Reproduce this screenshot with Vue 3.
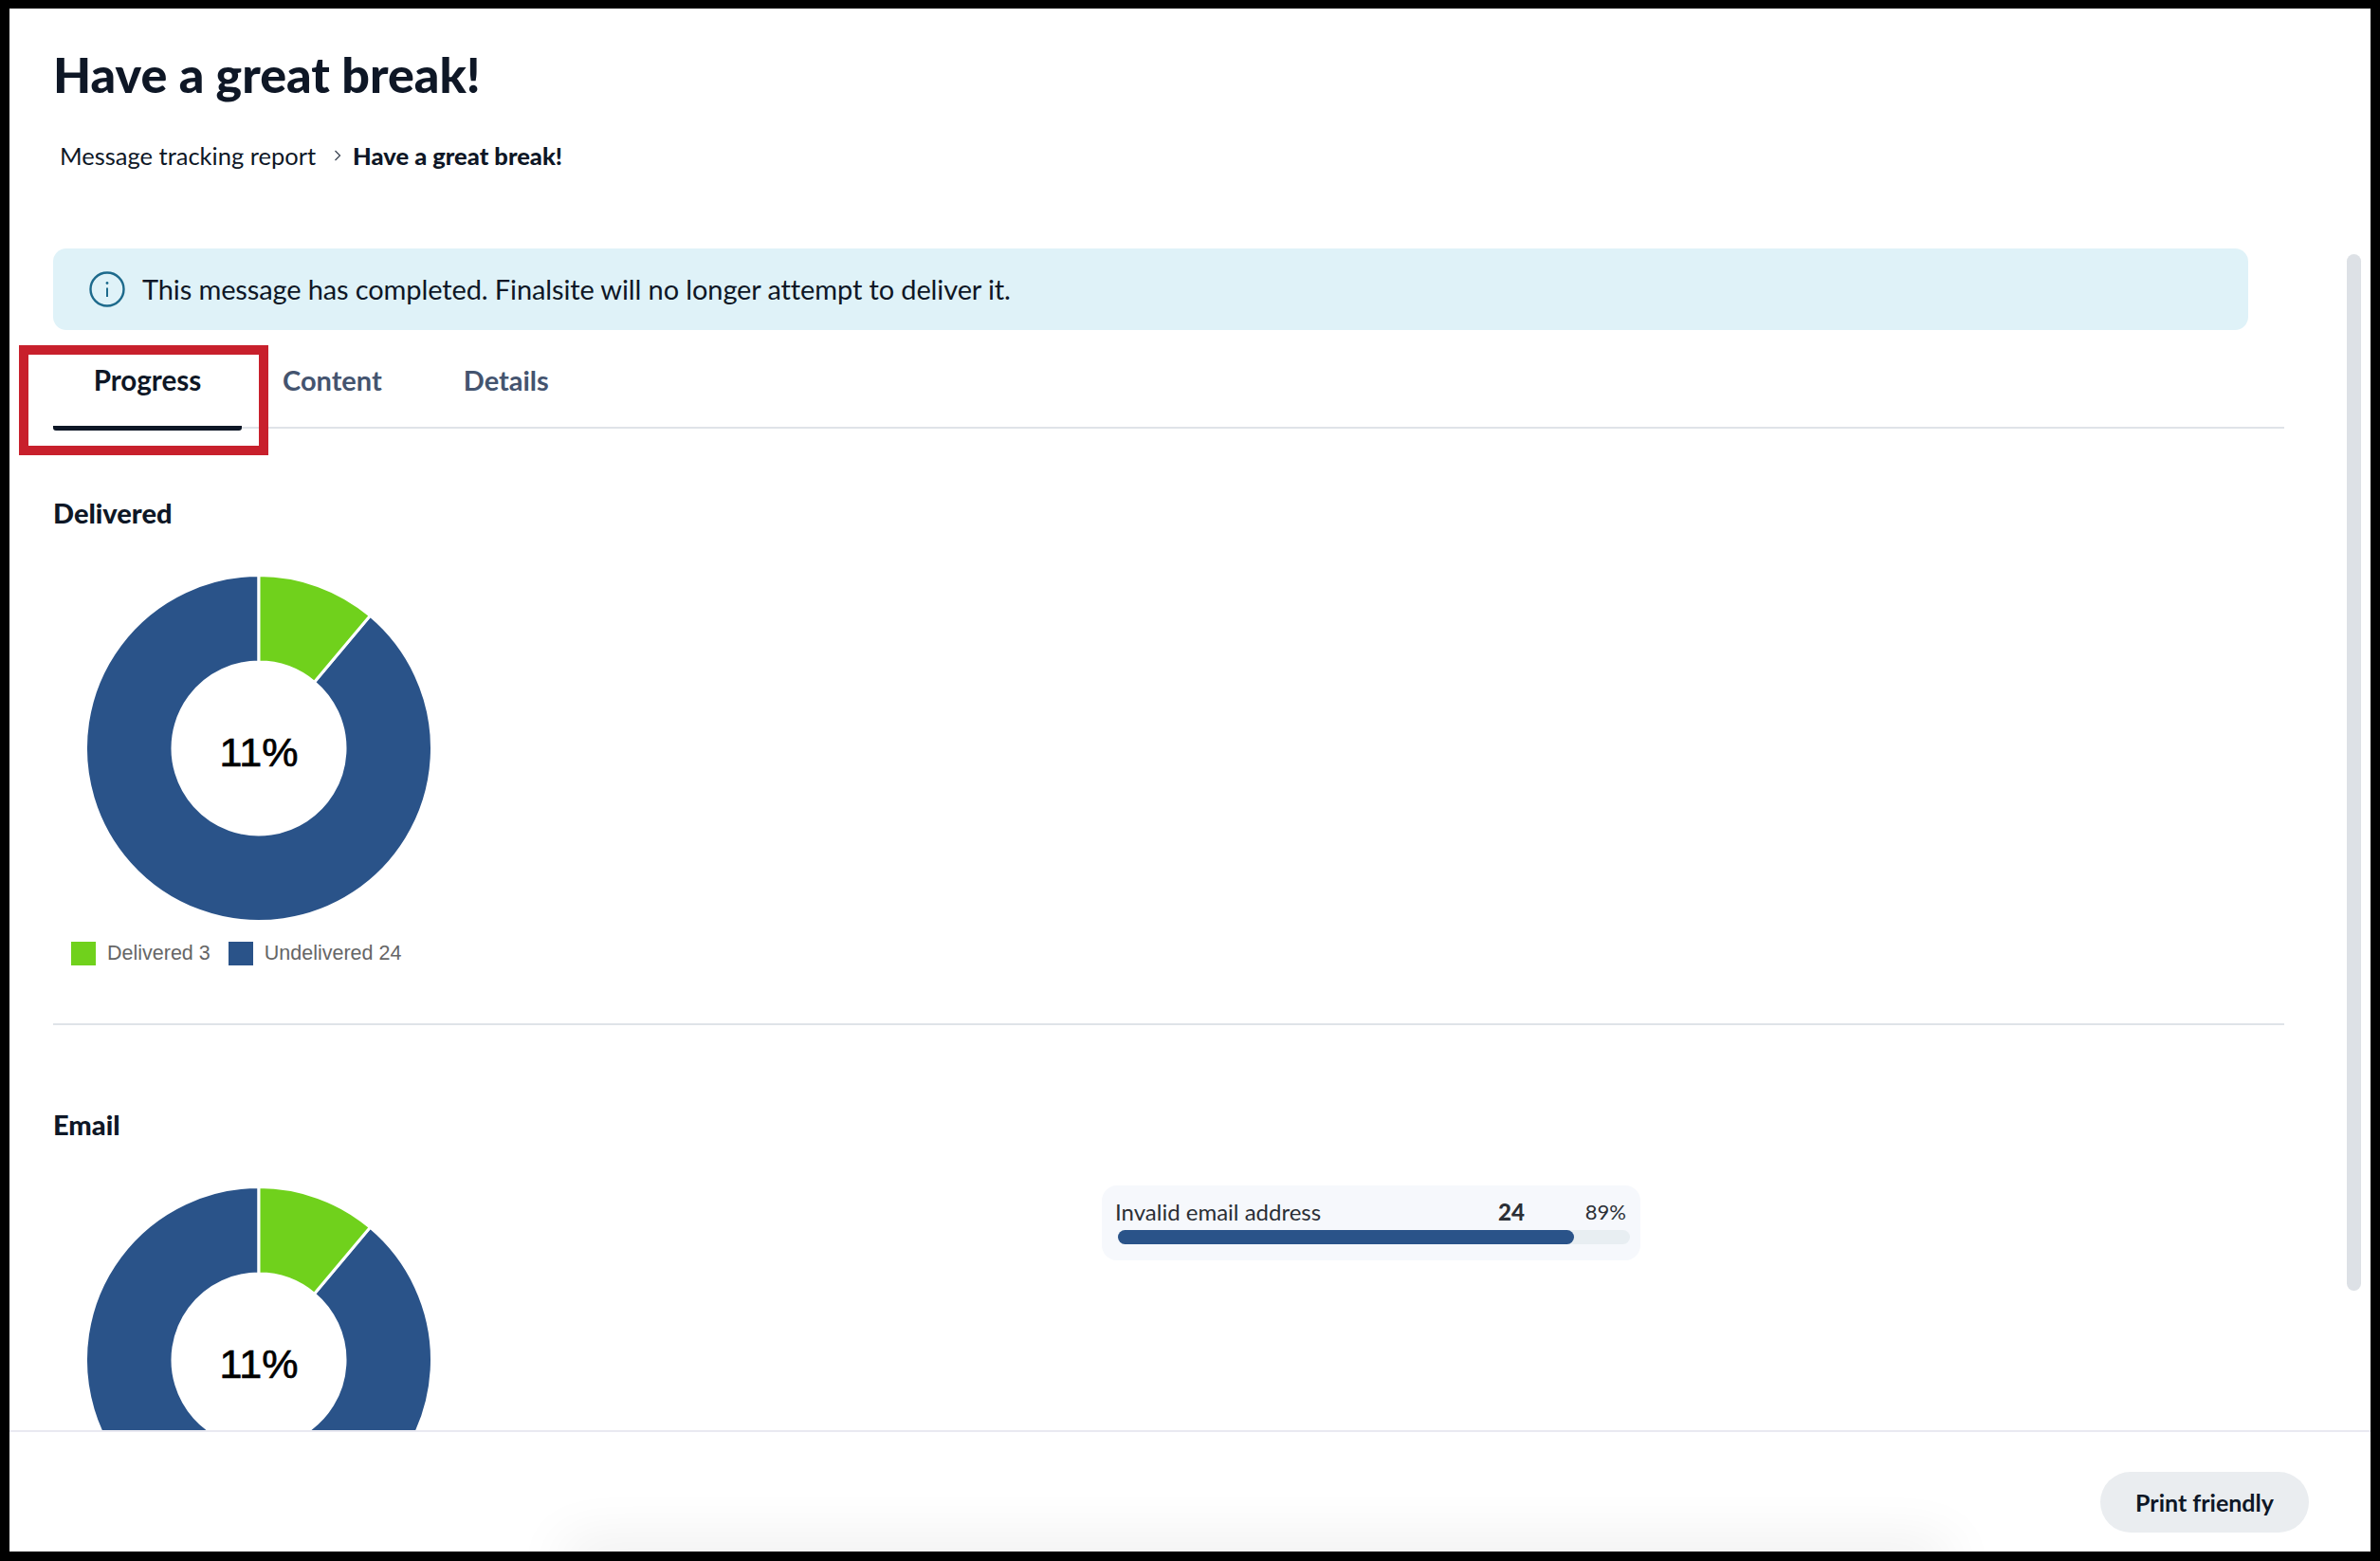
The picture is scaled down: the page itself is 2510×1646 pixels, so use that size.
<template>
  <div class="frame">
    <div class="report">
      <div class="report__body">
        <h1 class="report__title">Have a great break!</h1>

        <nav class="crumbs">
          <span>Message tracking report</span>
          <svg class="crumbs__sep" width="8" height="12" viewBox="0 0 8 12" fill="none">
            <path d="M1.5 1L6.5 6L1.5 11" stroke="#3d4654" stroke-width="1.3" />
          </svg>
          <strong>Have a great break!</strong>
        </nav>

        <div class="notice">
          <svg width="38" height="38" viewBox="0 0 38 38" fill="none">
            <circle cx="19" cy="19" r="17.5" stroke="#1d6a8c" stroke-width="2.4" />
            <path d="M19 17.5V27" stroke="#1d6a8c" stroke-width="2" />
            <circle cx="19" cy="12.5" r="1.4" fill="#1d6a8c" />
          </svg>
          <span class="notice__text">This message has completed. Finalsite will no longer attempt to deliver it.</span>
        </div>

        <div class="tabs">
          <div
            v-for="tab in tabs"
            :key="tab"
            class="tabs__item"
            :class="{ 'is-active': tab === activeTab }"
          >
            {{ tab }}
          </div>
          <div class="tabs__mark"></div>
        </div>

        <section v-for="sec in sections" :key="sec.title" class="section">
          <h2 class="section__title">{{ sec.title }}</h2>
          <div class="section__row">
            <div class="section__chart">
              <svg class="donut" width="362" height="362" viewBox="0 0 362 362">
                <path :d="arcPath(40, 360)" fill="#2a5389" stroke="#fff" stroke-width="3" />
                <path :d="arcPath(0, 40)" fill="#70d11c" stroke="#fff" stroke-width="3" />
                <text x="181" y="200" text-anchor="middle" class="donut__label">11%</text>
              </svg>
              <div class="legend">
                <span class="legend__swatch legend__swatch--green"></span>
                <span class="legend__text">Delivered 3</span>
                <span class="legend__swatch legend__swatch--blue"></span>
                <span class="legend__text">Undelivered 24</span>
              </div>
            </div>
            <div v-if="sec.reason" class="reason">
              <div class="reason__head">
                <span class="reason__name">{{ sec.reason.name }}</span>
                <strong class="reason__count">{{ sec.reason.count }}</strong>
                <span class="reason__pct">{{ sec.reason.pct }}%</span>
              </div>
              <div class="reason__track">
                <div class="reason__fill" :style="{ width: sec.reason.pct + '%' }"></div>
              </div>
            </div>
          </div>
        </section>
      </div>
      <div class="scrollbar"></div>
    </div>

    <footer class="report__footer">
      <button type="button" class="print-btn">Print friendly</button>
      <div class="report__glow"></div>
    </footer>
  </div>
</template>

<script setup>
const tabs = ["Progress", "Content", "Details"];
const activeTab = "Progress";

const sections = [
  { title: "Delivered" },
  {
    title: "Email",
    reason: { name: "Invalid email address", count: 24, pct: 89 },
  },
];

const C = 181;
const OUTER = 182.5;
const INNER = 91;

function point(r, deg) {
  const a = (deg * Math.PI) / 180;
  return `${(C + r * Math.sin(a)).toFixed(2)} ${(C - r * Math.cos(a)).toFixed(2)}`;
}

function arcPath(from, to) {
  const large = to - from > 180 ? 1 : 0;
  return [
    `M${point(OUTER, from)}`,
    `A${OUTER} ${OUTER} 0 ${large} 1 ${point(OUTER, to)}`,
    `L${point(INNER, to)}`,
    `A${INNER} ${INNER} 0 ${large} 0 ${point(INNER, from)}`,
    "Z",
  ].join(" ");
}
</script>

<style>
html,
body {
  margin: 0;
  background: #000;
}
</style>

<style scoped>
.frame {
  box-sizing: border-box;
  width: 2490px;
  height: 1627px;
  margin: 9px 0 0 10px;
  background: #fff;
  display: flex;
  flex-direction: column;
  font-family: Lato, "Noto Sans", sans-serif;
  color: #0e1726;
}

.report {
  position: relative;
  height: 1499px;
  flex-shrink: 0;
  overflow: hidden;
  border-bottom: 2px solid #e9e9f1;
  box-sizing: content-box;
}

.report__body {
  width: 2353px;
  padding: 39px 0 0 46px;
}

.report__title {
  margin: 0;
  font-size: 52px;
  line-height: 60px;
  font-weight: 900;
}

.crumbs {
  display: flex;
  align-items: center;
  height: 30px;
  margin: 41px 0 0 7px;
  font-size: 25.5px;
}

.crumbs__sep {
  margin: 0 12px 0 19px;
}

.crumbs strong {
  font-weight: 900;
}

.notice {
  display: flex;
  align-items: center;
  gap: 18px;
  width: 2315px;
  height: 86px;
  margin-top: 83px;
  padding-left: 38px;
  box-sizing: border-box;
  border-radius: 14px;
  background: #dff2f8;
  font-size: 29px;
  letter-spacing: -0.12px;
}

.notice__text {
  margin-top: -2px;
}

.tabs {
  position: relative;
  display: flex;
  height: 102px;
  border-bottom: 2px solid #dfe3e8;
}

.tabs__item {
  width: 199px;
  padding-top: 36px;
  line-height: 34px;
  text-align: center;
  font-size: 29px;
  font-weight: 700;
  color: #44546f;
}

.tabs__item:first-child {
  font-size: 29.6px;
}

.tabs__item + .tabs__item {
  width: auto;
  margin-left: 43px;
  margin-right: 43px;
}

.tabs__item.is-active {
  color: #0e1726;
  border-bottom: 5px solid #0e1726;
  border-radius: 0 0 3px 3px;
  height: 65px;
  margin-bottom: -3px;
}

.tabs__mark {
  position: absolute;
  left: -36px;
  top: 16px;
  width: 243px;
  height: 96px;
  border: 10px solid #c8202c;
}

.section {
  height: 629px;
  padding-top: 72px;
  box-sizing: border-box;
  border-bottom: 2px solid #dfe3e8;
}

.section + .section {
  height: auto;
  border-bottom: 0;
  padding-top: 88px;
}

.section__title {
  margin: 0;
  font-size: 29px;
  line-height: 34px;
  font-weight: 900;
}

.section__row {
  display: flex;
  align-items: flex-start;
}

.section__chart {
  width: 1106px;
  flex-shrink: 0;
}

.donut {
  display: block;
  margin: 50px 0 0 36px;
  overflow: visible;
}

.donut__label {
  font-family: "Liberation Sans", Arial, sans-serif;
  font-size: 43px;
  fill: #000;
  stroke: #000;
  stroke-width: 0.7px;
}

.legend {
  display: flex;
  align-items: center;
  margin: 23px 0 0 19px;
  font-family: "Liberation Sans", Arial, sans-serif;
  font-size: 21.5px;
  color: #666;
}

.legend__swatch {
  width: 26px;
  height: 25px;
  margin-right: 12px;
}

.legend__swatch--green {
  background: #70d11c;
}

.legend__swatch--blue {
  background: #2a5389;
}

.legend__text {
  margin-right: 19px;
}

.reason {
  width: 568px;
  height: 79px;
  margin-top: 47px;
  padding: 11px 11px 0 14px;
  box-sizing: border-box;
  border-radius: 16px;
  background: #f6f8fc;
  font-size: 24px;
  color: #2b2f36;
}

.reason__head {
  display: flex;
  align-items: center;
  height: 32px;
}

.reason__name {
  flex: 1;
}

.reason__count {
  font-weight: 900;
  margin-right: 64px;
}

.reason__pct {
  margin-right: 4px;
  font-size: 22px;
}

.reason__track {
  height: 15px;
  margin: 4px 0 0 3px;
  border-radius: 8px;
  background: #e8eef2;
}

.reason__fill {
  height: 100%;
  border-radius: 8px;
  background: #2a5389;
}

.scrollbar {
  position: absolute;
  top: 259px;
  right: 10px;
  width: 15px;
  height: 1093px;
  border-radius: 8px;
  background: #dde1e6;
}

.report__footer {
  position: relative;
  flex: 1;
  display: flex;
  align-items: flex-start;
  justify-content: flex-end;
  padding: 42px 65px 0 0;
  overflow: hidden;
}

.print-btn {
  width: 220px;
  height: 64px;
  border: none;
  border-radius: 32px;
  background: #eaedf0;
  font-family: Lato, "Noto Sans", sans-serif;
  font-size: 25px;
  font-weight: 700;
  color: #0e1726;
}

.report__glow {
  position: absolute;
  left: 600px;
  width: 1430px;
  bottom: -16px;
  height: 10px;
  box-shadow: 0 0 60px 14px rgba(0, 0, 0, 0.09);
}
</style>
